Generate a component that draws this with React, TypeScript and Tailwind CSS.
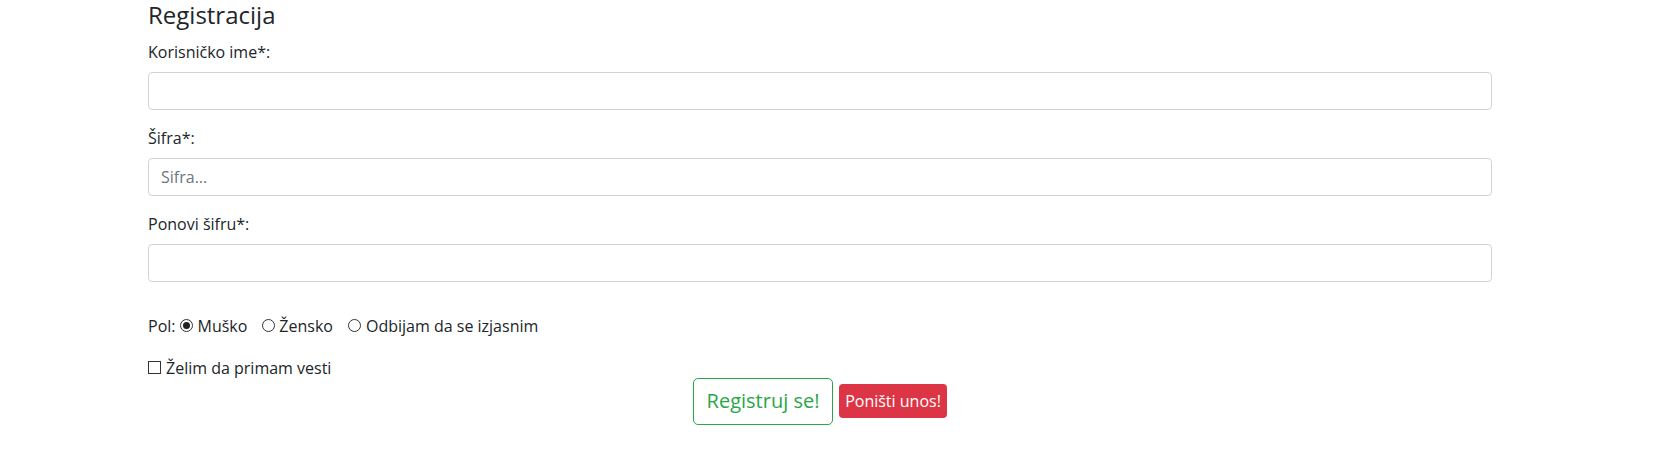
import { useState } from 'react';

function Radio({ checked }: { checked: boolean }) {
  return (
    <span className="inline-flex h-[13px] w-[13px] items-center justify-center rounded-full border border-[#333] bg-white">
      {checked && <span className="h-[7px] w-[7px] rounded-full bg-[#222]" />}
    </span>
  );
}

export default function App() {
  const [pol, setPol] = useState('m');
  const [vesti, setVesti] = useState(false);

  const field = (label: string, placeholder = '') => (
    <div className="mb-4">
      <label className="mb-2 block leading-6">{label}</label>
      <input
        type="text"
        placeholder={placeholder}
        className="block h-[38px] w-full rounded-[4px] border border-[#ced4da] bg-white px-3 text-base text-[#495057] outline-none placeholder:text-[#6c757d]"
      />
    </div>
  );

  return (
    <div className="min-h-screen bg-white font-['Open_Sans',sans-serif] text-base text-[#212529]">
      <form className="ml-[148px] w-[1344px]" onSubmit={(e) => e.preventDefault()}>
        <h4 className="mb-[10px] pt-[1px] text-[24px] leading-[28.8px] font-normal">Registracija</h4>

        {field('Korisničko ime*:')}
        {field('Šifra*:', 'Sifra...')}
        {field('Ponovi šifru*:')}

        <div className="mt-8 flex items-center leading-6">
          <span>Pol:</span>
          <label className="ml-[4px] flex items-center cursor-pointer" onClick={() => setPol('m')}>
            <Radio checked={pol === 'm'} />
            <span className="ml-[5px]">Muško</span>
          </label>
          <label className="ml-[15px] flex items-center cursor-pointer" onClick={() => setPol('z')}>
            <Radio checked={pol === 'z'} />
            <span className="ml-[4px]">Žensko</span>
          </label>
          <label className="ml-[15px] flex items-center cursor-pointer" onClick={() => setPol('o')}>
            <Radio checked={pol === 'o'} />
            <span className="ml-[5px]">Odbijam da se izjasnim</span>
          </label>
        </div>

        <label className="mt-[20px] flex items-center leading-5 cursor-pointer" onClick={() => setVesti(!vesti)}>
          <span className="flex h-[13px] w-[13px] items-center justify-center border border-[#333] bg-white text-[10px] leading-none">
            {vesti ? '✓' : ''}
          </span>
          <span className="ml-[5px]">Želim da primam vesti</span>
        </label>

        <div className="flex items-center justify-center gap-[6px]">
          <button
            type="submit"
            className="h-[47px] w-[140px] rounded-[5px] border border-[#28a745] bg-white text-[20px] text-[#28a745]"
          >
            Registruj se!
          </button>
          <button
            type="reset"
            className="h-[34px] w-[108px] rounded-[4px] bg-[#dc3545] text-base text-white"
          >
            Poništi unos!
          </button>
        </div>
      </form>
    </div>
  );
}
